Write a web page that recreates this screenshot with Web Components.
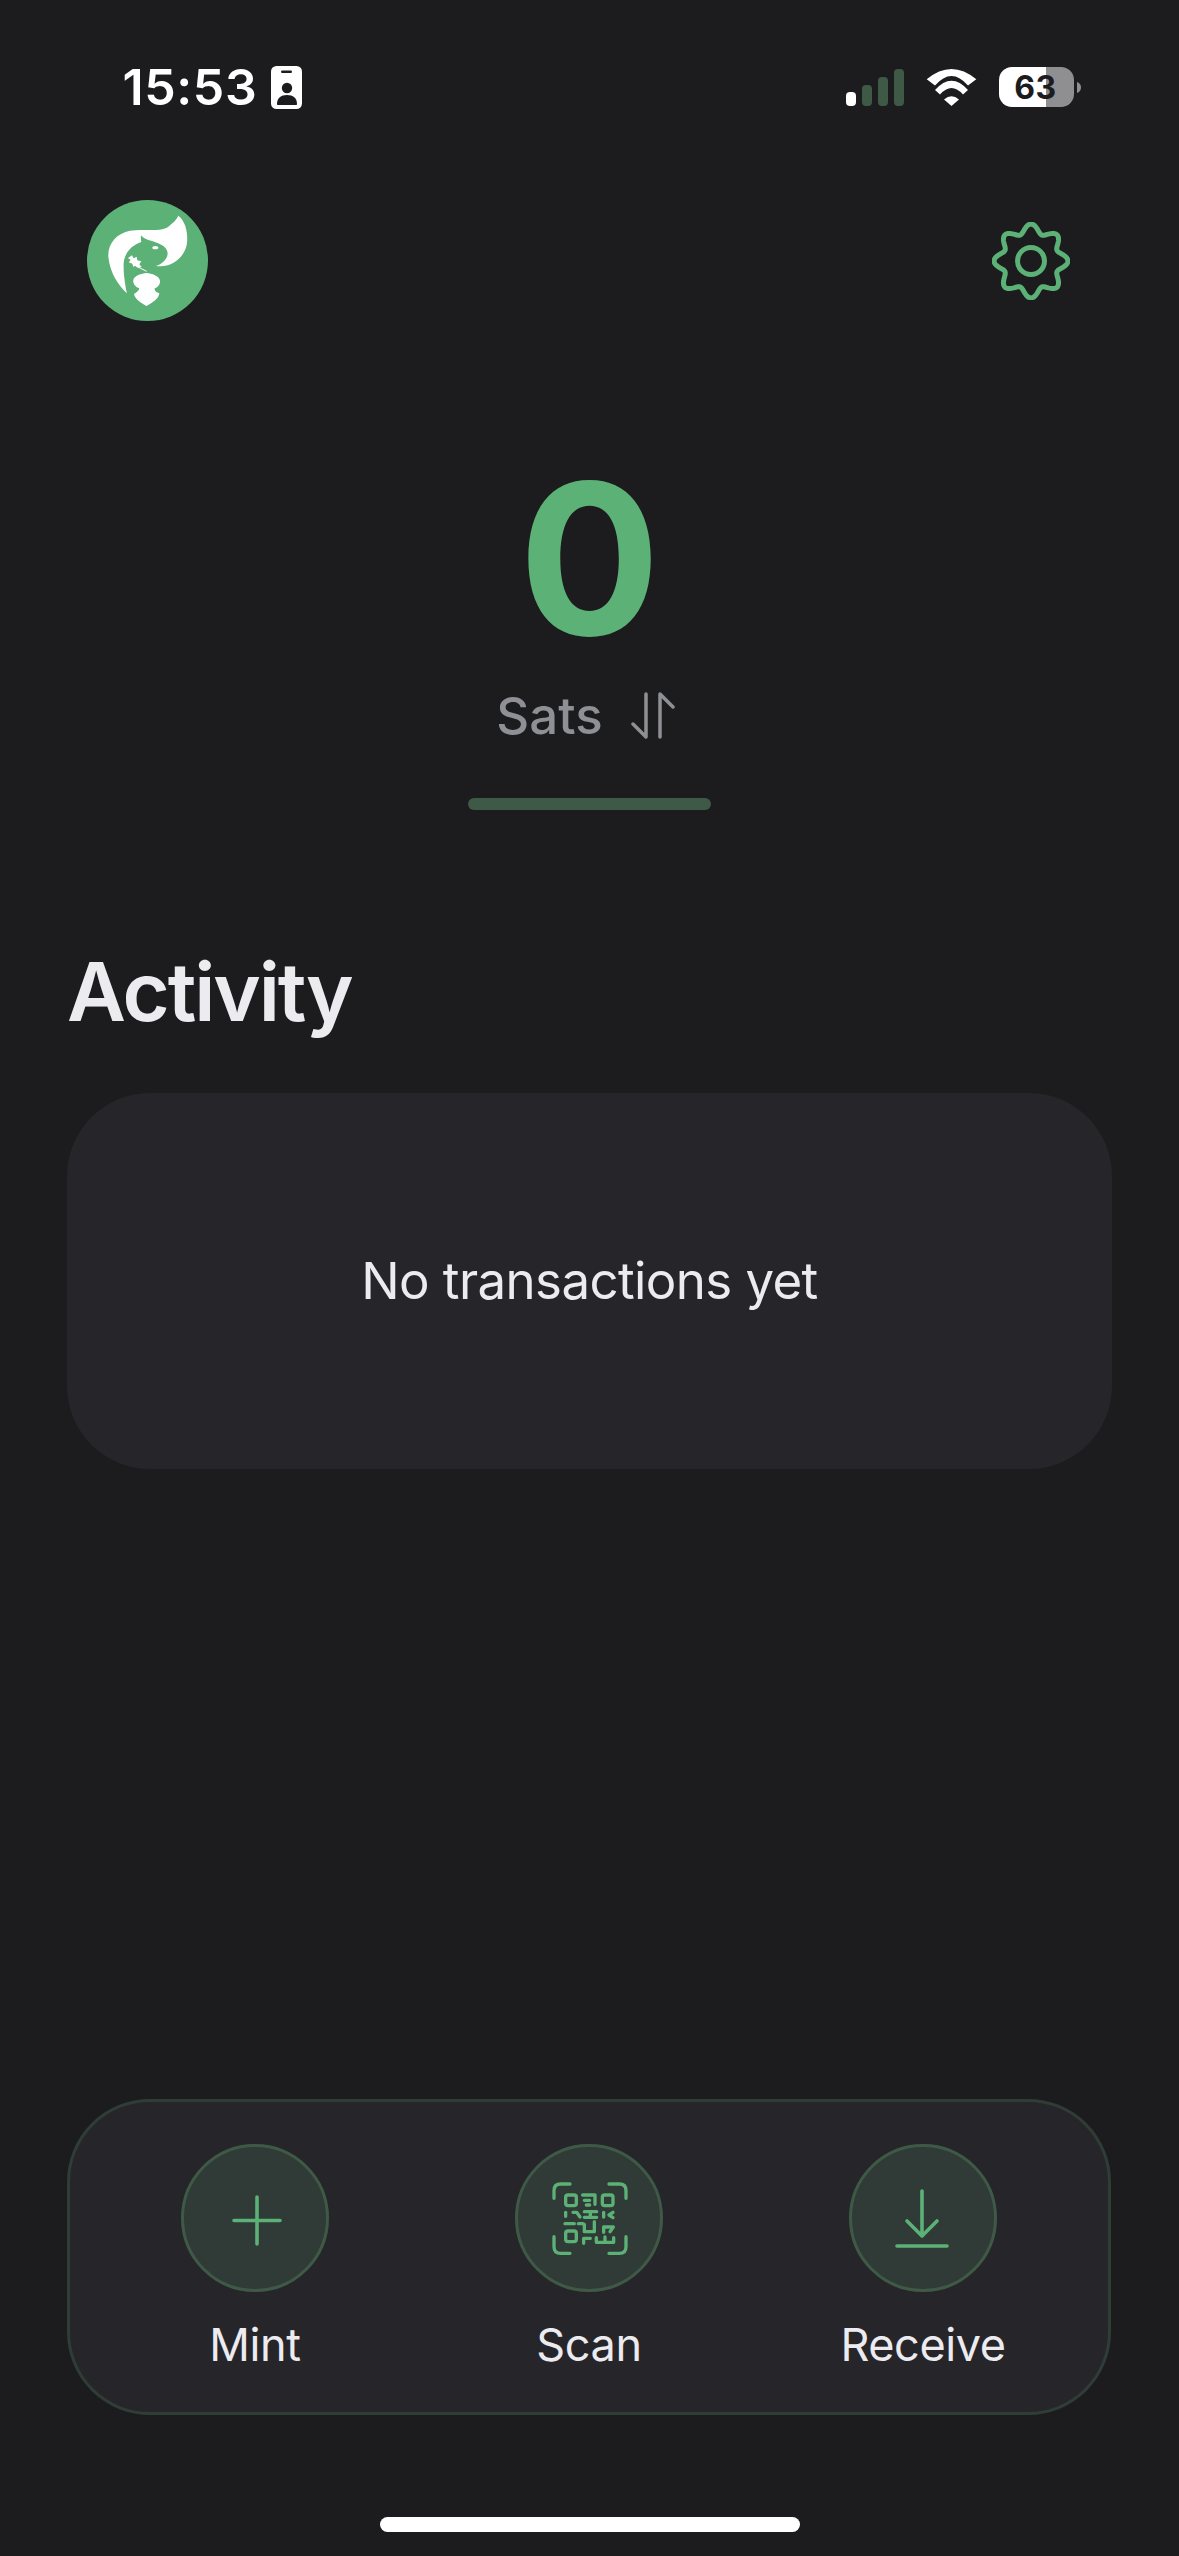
<!DOCTYPE html>
<html lang="en">
<head>
<meta charset="utf-8">
<title>Wallet</title>
<style>
    :root {
        --green: #5cb176;
        --green-dim: #3e5a47;
        --bg: #1c1c1e;
        --panel: #26262a;
        --text: #ecebf0;
        --muted: #8e9095;
    }
    html, body {
        margin: 0;
        background: #1c1c1e;
        font-family: Inter, "Noto Sans", sans-serif;
    }
</style>
</head>
<body>
<wallet-screen>
    <status-bar time="15:53" battery="63"></status-bar>
    <top-bar></top-bar>
    <balance-view amount="0" unit="Sats"></balance-view>
    <activity-section heading="Activity">No transactions yet</activity-section>
    <action-dock>
        <action-button label="Mint" icon="plus"></action-button>
        <action-button label="Scan" icon="scan"></action-button>
        <action-button label="Receive" icon="receive"></action-button>
    </action-dock>
    <home-indicator></home-indicator>
</wallet-screen>

<script>
    class WalletScreen extends HTMLElement {
        constructor() {
            super();
            this.attachShadow({ mode: 'open' });
            this.shadowRoot.innerHTML = `
            <style>
                :host {
                    display: flex;
                    flex-direction: column;
                    width: 1179px;
                    height: 2556px;
                    background: var(--bg);
                    overflow: hidden;
                }
            </style>
            <slot></slot>
            `;
        }
    }

    class StatusBar extends HTMLElement {
        constructor() {
            super();
            this.attachShadow({ mode: 'open' });
            const time = this.getAttribute('time');
            const battery = this.getAttribute('battery');
            this.shadowRoot.innerHTML = `
            <style>
                :host {
                    display: flex;
                    justify-content: space-between;
                    height: 43px;
                    padding: 66px 98px 0 124px;
                    color: #fff;
                }
                .left { display: flex; height: 43px; }
                .time {
                    width: 148.5px;
                    margin-left: -1.5px;
                    font-size: 50px;
                    font-weight: 600;
                    line-height: 43px;
                    letter-spacing: 0.6px;
                }
                .right { display: flex; align-items: flex-end; height: 40px; margin-top: 1px; }
                .signal { display: flex; align-items: flex-end; gap: 6px; margin: 0 22px 1px 0; }
                .signal i { display: block; width: 10px; border-radius: 4px; background: var(--green-dim); }
                .signal i:first-child { background: #fff; }
                .wifi { display: block; margin: 0 22px 1px 0; }
                .battery {
                    width: 75px;
                    height: 40px;
                    padding-right: 2px;
                    box-sizing: border-box;
                    border-radius: 13px;
                    display: flex;
                    align-items: center;
                    justify-content: center;
                    background: linear-gradient(90deg, #fff 47px, #8f8f92 47px);
                    color: var(--bg);
                    font-size: 32px;
                    font-weight: 700;
                    letter-spacing: 0.5px;
                }
                .nub { display: block; align-self: center; margin-left: 3px; }
            </style>
            <div class="left">
                <div class="time">${time}</div>
                <svg width="31" height="43" viewBox="0 0 31 43">
                    <rect width="31" height="43" rx="5.5" fill="#fff"/>
                    <rect x="10" y="4.5" width="11" height="2.4" rx="1.2" fill="#1c1c1e"/>
                    <circle cx="16" cy="22" r="5.2" fill="#1c1c1e"/>
                    <path d="M6 38c0-6 4-9 10-9s10 3 10 9c0 .6-.4 1-1 1H7c-.6 0-1-.4-1-1z" fill="#1c1c1e"/>
                </svg>
            </div>
            <div class="right">
                <div class="signal">
                    <i style="height:14px"></i><i style="height:21px"></i><i style="height:29px"></i><i style="height:37px"></i>
                </div>
                <svg class="wifi" width="51" height="37" viewBox="0 0 51 37" fill="#fff">
                    <path d="M.7 10.3Q25.5-10.3 50.3 10.3L42 16.5Q25.5-2.6 9 16.5Z"/>
                    <path d="M9 21Q25.5 2.4 42 21L37 25.5Q25.5 12.5 14 25.5Z"/>
                    <path d="M18 30.5Q25.5 24 33 30.5L25.5 37Z"/>
                </svg>
                <div class="battery">${battery}</div>
                <svg class="nub" width="4" height="11" viewBox="0 0 4 11"><path d="M0 0c2.4.6 4 2.8 4 5.5S2.4 10.4 0 11z" fill="#8f8f92"/></svg>
            </div>
            `;
        }
    }

    class TopBar extends HTMLElement {
        constructor() {
            super();
            this.attachShadow({ mode: 'open' });

            // eight round teeth, worked out in polar form
            let gear = '';
            for (let i = 0; i <= 240; i++) {
                const a = i / 240 * Math.PI * 2;
                const r = 32.5 + 4.4 * Math.cos(8 * a);
                gear += (i ? 'L' : 'M') + (39 + r * Math.sin(a)).toFixed(2) + ' ' + (39 - r * Math.cos(a)).toFixed(2);
            }

            this.shadowRoot.innerHTML = `
            <style>
                :host {
                    display: flex;
                    justify-content: space-between;
                    align-items: center;
                    height: 121px;
                    margin-top: 91px;
                    padding: 0 109px 0 87px;
                }
                svg { display: block; }
            </style>
            <svg width="121" height="121" viewBox="21 480 363 363">
                <circle cx="202.5" cy="661.5" r="181.5" fill="#5cb176"/>
                <g fill="#fff">
                    <path d="M295 527C320 545 325 590 320 615C312 655 270 685 228 678C245 672 262 660 263 640C262 618 235 608 205 600C195 597 188 592 183 586C182 592 183 600 184 606C155 615 133 640 131 670C130 700 135 735 141 760C115 735 90 700 85 650C83 610 110 580 150 572C190 565 240 578 265 560C280 548 290 538 295 527Z"/>
                    <ellipse cx="226" cy="623" rx="9" ry="5"/>
                    <path d="M200 699C215 700 238 708 240 722C241 735 232 742 224 745C224 752 226 756 238 760C238 775 215 790 200 798C185 790 165 778 162 762C172 756 178 750 178 745C168 742 158 732 160 720C162 708 185 700 200 699Z"/>
                    <path d="M156 646L161 655L170 650L172 661L184 664L178 673L185 681L174 683L165 677L160 681L157 671L146 667L152 660L144 654Z"/>
                </g>
                <path d="M168 678L200 694" stroke="#fff" stroke-width="3" fill="none"/>
            </svg>
            <svg width="78" height="78" viewBox="0 0 78 78" fill="none" stroke="#5cb176" stroke-width="5" stroke-linejoin="round">
                <path d="${gear}Z"/>
                <circle cx="39" cy="39" r="13.5"/>
            </svg>
            `;
        }
    }

    class BalanceView extends HTMLElement {
        constructor() {
            super();
            this.attachShadow({ mode: 'open' });
            this.shadowRoot.innerHTML = `
            <style>
                :host {
                    display: flex;
                    flex-direction: column;
                    align-items: center;
                    padding-top: 133px;
                }
                .amount {
                    font-size: 210px;
                    font-weight: 700;
                    line-height: 210px;
                    color: var(--green);
                }
                .unit {
                    display: flex;
                    align-items: flex-start;
                    gap: 28px;
                    margin-top: 27px;
                    padding-right: 8px;
                    font-size: 51px;
                    font-weight: 500;
                    line-height: 50px;
                    color: var(--muted);
                }
                .bar {
                    width: 243px;
                    height: 12px;
                    margin-top: 57px;
                    border-radius: 6px;
                    background: var(--green-dim);
                }
                svg { display: block; }
            </style>
            <div class="amount">${this.getAttribute('amount')}</div>
            <div class="unit">
                <span>${this.getAttribute('unit')}</span>
                <svg width="44" height="48" viewBox="0 0 44 48" fill="none" stroke="#8e9095" stroke-width="3.5" stroke-linecap="round" stroke-linejoin="round">
                    <path d="M15 3V46L2 33M29 46V3L42 16"/>
                </svg>
            </div>
            <div class="bar"></div>
            `;
        }
    }

    class ActivitySection extends HTMLElement {
        constructor() {
            super();
            this.attachShadow({ mode: 'open' });
            this.shadowRoot.innerHTML = `
            <style>
                :host {
                    display: block;
                    margin-top: 142px;
                    padding: 0 67px;
                    color: var(--text);
                }
                h2 {
                    margin: 0;
                    font-size: 81px;
                    font-weight: 600;
                    line-height: 81px;
                    letter-spacing: -2.1px;
                }
                .card {
                    display: flex;
                    align-items: center;
                    justify-content: center;
                    height: 376px;
                    margin-top: 60px;
                    border-radius: 83px;
                    background: var(--panel);
                    font-size: 51px;
                    line-height: 60px;
                    letter-spacing: -0.6px;
                }
            </style>
            <h2>${this.getAttribute('heading')}</h2>
            <div class="card"><slot></slot></div>
            `;
        }
    }

    class ActionDock extends HTMLElement {
        constructor() {
            super();
            this.attachShadow({ mode: 'open' });
            this.shadowRoot.innerHTML = `
            <style>
                :host {
                    display: grid;
                    grid-template-columns: repeat(3, 1fr);
                    box-sizing: border-box;
                    height: 316px;
                    margin: auto 68px 0 67px;
                    padding: 42px 18px 0;
                    border: 3px solid #2f3d36;
                    border-radius: 83px;
                    background: var(--panel);
                }
            </style>
            <slot></slot>
            `;
        }
    }

    // icons are drawn on the inner box of the round button
    const ACTION_ICONS = {
        plus: `<path d="M73 50V97M50 73.5H96"/>`,
        receive: `<path d="M70 44V88M55 74L70 89L85 74M45 99H95"/>`,
        scan: `<g transform="translate(27 28) scale(.3333)" stroke-width="10">
                <path d="M75 27H47Q27 27 27 47V70M192 27H223Q243 27 243 47V70M27 185V215Q27 235 47 235H75M243 185V215Q243 235 223 235H192"/>
                <rect x="62" y="60" width="32" height="32" rx="7"/>
                <rect x="172" y="60" width="32" height="32" rx="7"/>
                <rect x="62" y="168" width="32" height="32" rx="7"/>
                <path d="M113 60H150V88M118 76H134M124 90H134"/>
                <path d="M62 112V124M84 112H95L105 126M118 110H155M136 110V127M118 127H155M176 112V126M204 112L192 120L204 128"/>
                <path d="M60 146H88M100 146H114M148 140V170H118V148M176 156H205L195 170M176 156V172"/>
                <path d="M116 205V190H136M154 188V202H206V188M180 186V200"/>
            </g>`
    };

    class ActionButton extends HTMLElement {
        constructor() {
            super();
            this.attachShadow({ mode: 'open' });
            this.shadowRoot.innerHTML = `
            <style>
                :host {
                    display: flex;
                    flex-direction: column;
                    align-items: center;
                    color: var(--text);
                }
                .circle {
                    box-sizing: border-box;
                    width: 148px;
                    height: 148px;
                    border: 3px solid var(--green-dim);
                    border-radius: 50%;
                    background: #303a36;
                }
                svg { display: block; }
                .label {
                    margin-top: 30px;
                    font-size: 45px;
                    line-height: 45px;
                    letter-spacing: -0.4px;
                }
            </style>
            <div class="circle">
                <svg width="142" height="142" viewBox="0 0 142 142" fill="none" stroke="#5cb176" stroke-width="3.6" stroke-linecap="round" stroke-linejoin="round">
                    ${ACTION_ICONS[this.getAttribute('icon')]}
                </svg>
            </div>
            <div class="label">${this.getAttribute('label')}</div>
            `;
        }
    }

    class HomeIndicator extends HTMLElement {
        constructor() {
            super();
            this.attachShadow({ mode: 'open' });
            this.shadowRoot.innerHTML = `
            <style>
                :host {
                    display: block;
                    width: 420px;
                    height: 15px;
                    margin: 102px 0 24px 380px;
                    border-radius: 8px;
                    background: #fff;
                }
            </style>
            `;
        }
    }

    customElements.define('wallet-screen', WalletScreen);
    customElements.define('status-bar', StatusBar);
    customElements.define('top-bar', TopBar);
    customElements.define('balance-view', BalanceView);
    customElements.define('activity-section', ActivitySection);
    customElements.define('action-dock', ActionDock);
    customElements.define('action-button', ActionButton);
    customElements.define('home-indicator', HomeIndicator);
</script>
</body>
</html>
